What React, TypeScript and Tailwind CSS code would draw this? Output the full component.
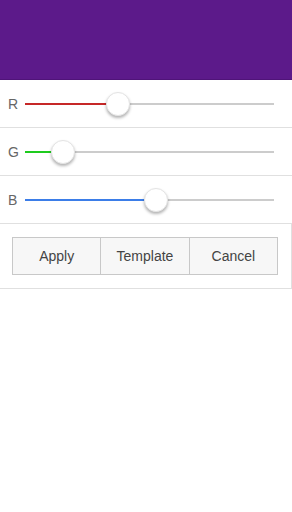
import React from "react";

function SliderRow({ label, value, color }: { label: string; value: number; color: string }) {
  return (
    <div className="flex h-12 items-center border-b border-[#e0e0e0] pl-2 pr-[18px] pt-px">
      <span className="w-[17px] text-[14px] text-[#666]">{label}</span>
      <div className="relative h-6 flex-1">
        <div className="absolute left-0 right-0 top-1/2 h-[2px] -translate-y-1/2 bg-[#cccccc]" />
        <div
          className="absolute left-0 top-1/2 h-[2px] -translate-y-1/2"
          style={{ width: `${value}%`, backgroundColor: color }}
        />
        <div
          className="absolute top-1/2 h-6 w-6 -translate-x-1/2 -translate-y-1/2 rounded-full border border-[#e4e4e4] bg-white shadow-[0_2px_3px_rgba(0,0,0,0.3)]"
          style={{ left: `${value}%` }}
        />
      </div>
    </div>
  );
}

export default function App() {
  return (
    <div className="h-[512px] w-[292px] bg-white" style={{ fontFamily: '"Liberation Sans", Arial, sans-serif' }}>
      <div className="h-20 border-b border-[#4f1478] bg-[#5c1a8a]" />
      <SliderRow label="R" value={37.3} color="#c62828" />
      <SliderRow label="G" value={15.3} color="#1ecb1e" />
      <SliderRow label="B" value={52.6} color="#3b7de8" />
      <div className="flex h-[65px] items-center border-b border-r border-[#e0e0e0] pl-3 pr-[13px]">
        <div className="flex h-[38px] flex-1 border border-[#c8c8c8] bg-[#f7f7f7] text-[14px] text-[#444]">
          <div className="flex flex-1 items-center justify-center">Apply</div>
          <div className="flex flex-1 items-center justify-center border-l border-[#c8c8c8]">Template</div>
          <div className="flex flex-1 items-center justify-center border-l border-[#c8c8c8]">Cancel</div>
        </div>
      </div>
    </div>
  );
}
